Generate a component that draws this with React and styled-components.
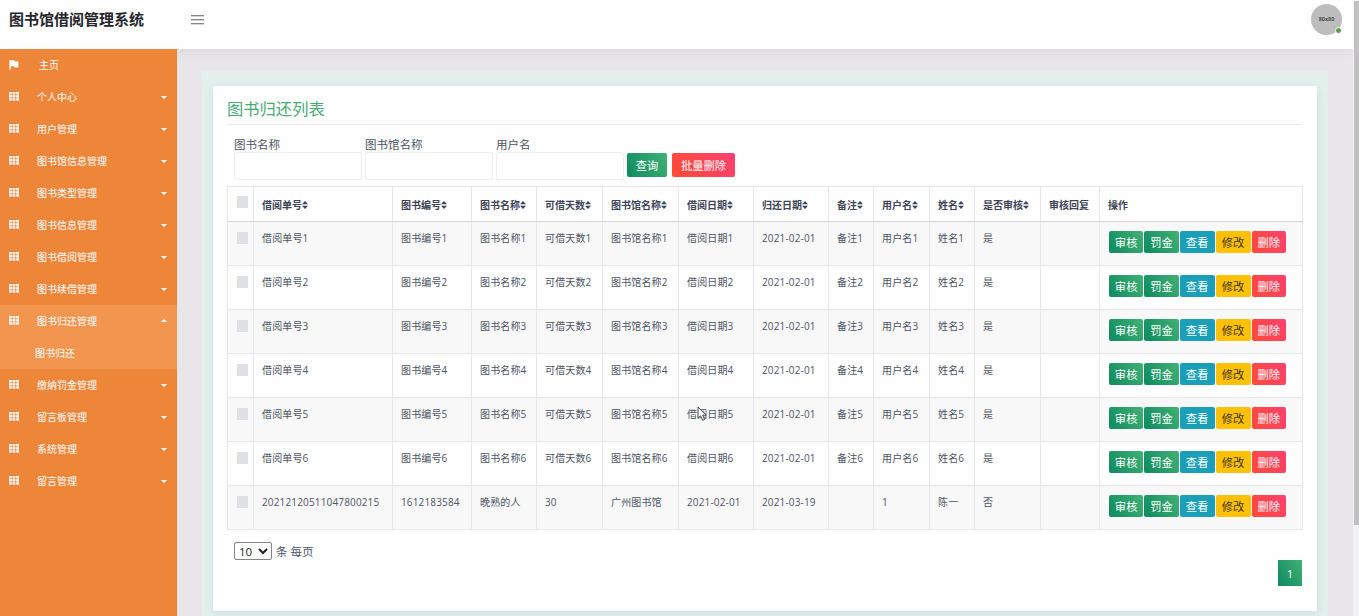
import React from 'react'
import styled, { createGlobalStyle } from 'styled-components'

const columns = [
  { title: '借阅单号', width: 139, sort: true },
  { title: '图书编号', width: 79, sort: true },
  { title: '图书名称', width: 65, sort: true },
  { title: '可借天数', width: 66, sort: true },
  { title: '图书馆名称', width: 76, sort: true },
  { title: '借阅日期', width: 75, sort: true },
  { title: '归还日期', width: 75, sort: true },
  { title: '备注', width: 45, sort: true },
  { title: '用户名', width: 56, sort: true },
  { title: '姓名', width: 45, sort: true },
  { title: '是否审核', width: 66, sort: true },
  { title: '审核回复', width: 59 },
  { title: '操作', width: 203 }
]

const rows = [
  ...[1, 2, 3, 4, 5, 6].map((n) => [
    `借阅单号${n}`, `图书编号${n}`, `图书名称${n}`, `可借天数${n}`, `图书馆名称${n}`,
    `借阅日期${n}`, '2021-02-01', `备注${n}`, `用户名${n}`, `姓名${n}`, '是', ''
  ]),
  ['20212120511047800215', '1612183584', '晚熟的人', '30', '广州图书馆', '2021-02-01', '2021-03-19', '', '1', '陈一', '否', '']
]

const menu = [
  '个人中心', '用户管理', '图书馆信息管理', '图书类型管理', '图书信息管理', '图书借阅管理',
  '图书续借管理', '图书归还管理', '缴纳罚金管理', '留言板管理', '系统管理', '留言管理'
]

const GridIcon = () => (
  <svg width="10" height="9" viewBox="0 0 10 9" fill="#fff">
    {[0, 3.1, 6.2].map((y) => [0, 3.6, 7.2].map((x) => (
      <rect key={`${x}-${y}`} x={x} y={y} width="2.8" height="2.4" />
    )))}
  </svg>
)

const FlagIcon = () => (
  <svg width="10" height="10" viewBox="0 0 10 10" fill="#fff">
    <path d="M0.4 0.2H5.2L5.6 1.4H9.4V7.4H5.4L5 6.2H1.8V9.8H0.4Z" />
  </svg>
)

const SortIcon = () => (
  <svg width="6" height="8" viewBox="0 0 6 8" fill="#3e4457">
    <path d="M3 0L6 3.3H0ZM3 8L0 4.7H6Z" />
  </svg>
)

const Sidebar = () => (
  <Side>
    <MenuItem>
      <MenuIcon><FlagIcon /></MenuIcon>
      <HomeText>主页</HomeText>
    </MenuItem>
    {menu.map((name) => {
      const open = name === '图书归还管理'
      return (
        <MenuGroup key={name} $open={open}>
          <MenuItem>
            <MenuIcon><GridIcon /></MenuIcon>
            <MenuText>{name}</MenuText>
            <Caret $open={open} />
          </MenuItem>
          {open && <SubItem>图书归还</SubItem>}
        </MenuGroup>
      )
    })}
  </Side>
)

const ReturnTable = () => (
  <Table>
    <colgroup>
      <col style={{ width: 26 }} />
      {columns.map((col) => <col key={col.title} style={{ width: col.width }} />)}
    </colgroup>
    <thead>
      <tr>
        <HeadCell><Checkbox $head /></HeadCell>
        {columns.map((col) => (
          <HeadCell key={col.title}>
            <HeadLabel>{col.title}{col.sort && <SortIcon />}</HeadLabel>
          </HeadCell>
        ))}
      </tr>
    </thead>
    <tbody>
      {rows.map((row, r) => (
        <BodyRow key={row[0]}>
          <Cell><Checkbox /></Cell>
          {row.map((text, c) => (
            <Cell key={columns[c].title}>
              {text}
              {r === 4 && c === 5 && (
                <Pointer width="11" height="16" viewBox="0 0 11 16">
                  <path d="M1 1V12.2L3.6 9.8L5.6 14.4L7.6 13.5L5.7 9.1H9.3Z" fill="#fff" stroke="#333" strokeWidth="0.9" />
                </Pointer>
              )}
            </Cell>
          ))}
          <Cell>
            <Actions>
              <ActionButton $kind="green">审核</ActionButton>
              <ActionButton $kind="green">罚金</ActionButton>
              <ActionButton $kind="info">查看</ActionButton>
              <ActionButton $kind="warning">修改</ActionButton>
              <ActionButton $kind="danger">删除</ActionButton>
            </Actions>
          </Cell>
        </BodyRow>
      ))}
    </tbody>
  </Table>
)

const App = () => (
  <Window>
    <GlobalStyle />
    <Page>
      <Header>
        <Brand>图书馆借阅管理系统</Brand>
        <MenuToggle><span /><span /><span /></MenuToggle>
        <Avatar>80x80<Status /></Avatar>
      </Header>
      <Body>
        <Sidebar />
        <Main>
          <Panel>
            <Card>
              <Title>图书归还列表</Title>
              <Filters>
                {['图书名称', '图书馆名称', '用户名'].map((label) => (
                  <Field key={label}>
                    {label}
                    <Input />
                  </Field>
                ))}
                <SearchButton $kind="green">查询</SearchButton>
                <SearchButton $kind="danger">批量删除</SearchButton>
              </Filters>
              <ReturnTable />
              <PageSize>
                <Select defaultValue="10">
                  <option>10</option>
                  <option>25</option>
                  <option>50</option>
                </Select>
                条 每页
              </PageSize>
              <Pagination><PageButton>1</PageButton></Pagination>
            </Card>
          </Panel>
        </Main>
      </Body>
    </Page>
    <ScrollTrack><ScrollThumb /></ScrollTrack>
  </Window>
)

export default App

const GlobalStyle = createGlobalStyle`
  * {
    box-sizing: border-box;
  }

  body {
    margin: 0;
    overflow: hidden;
    font-family: 'Open Sans', 'Noto Sans CJK SC', sans-serif;
    font-size: 10px;
    color: #4d5463;
  }

  button, input, select {
    font-family: inherit;
  }

  svg {
    display: block;
  }
`

const fills = {
  green: 'linear-gradient(60deg, #0e8a5f, #41b176)',
  danger: 'linear-gradient(60deg, #ff4b35, #ff4070)',
  info: '#1b9fb8',
  warning: '#fec107'
}

const Window = styled.div`
  display: flex;
  height: 616px;
  overflow: hidden;
`
const Page = styled.div`
  flex: 1;
  display: flex;
  flex-direction: column;
  min-width: 0;
  background: #e8e6e9;
`
const Header = styled.header`
  display: flex;
  flex: 0 0 49px;
  padding: 0 11px 0 9px;
  background: #fefefe;
  box-shadow: 0 2px 16px rgba(0, 0, 0, 0.06);
`
const Brand = styled.h1`
  width: 182px;
  margin: 0;
  font-size: 15px;
  font-weight: 700;
  line-height: 38px;
  color: #24262b;
`
const MenuToggle = styled.div`
  display: flex;
  flex-direction: column;
  gap: 3px;
  width: 13px;
  margin-top: 15px;

  span {
    height: 1px;
    background: #858585;
    box-shadow: 0 1px 0 #d5d5d5;
  }
`
const Avatar = styled.div`
  position: relative;
  width: 31px;
  height: 31px;
  margin: 4px 0 0 auto;
  border-radius: 50%;
  background: #bdbdbd;
  color: #333;
  font-size: 5.5px;
  font-weight: 600;
  line-height: 31px;
  text-align: center;
`
const Status = styled.span`
  position: absolute;
  right: 0;
  bottom: 1px;
  width: 7px;
  height: 7px;
  border: 1.5px solid #fff;
  border-radius: 50%;
  background: #5f9a52;
`
const Body = styled.div`
  display: flex;
  flex: 1;
  min-height: 0;
`
const Side = styled.nav`
  position: relative;
  flex: 0 0 177px;
  background: #ee863a;
  color: #fff;
`
const MenuGroup = styled.div`
  background: ${(props) => (props.$open ? '#f1954f' : 'transparent')};
`
const MenuItem = styled.div`
  display: flex;
  height: 32px;
  padding: 0 10px 0 9px;
`
const MenuIcon = styled.div`
  width: 28px;
  padding-top: 11px;
`
const MenuText = styled.span`
  flex: 1;
  line-height: 33px;
`
const HomeText = styled(MenuText)`
  padding-left: 2px;
`
const Caret = styled.i`
  width: 0;
  height: 0;
  margin-top: 15px;
  border: 3px solid transparent;
  border-top-color: ${(props) => (props.$open ? 'transparent' : '#fff')};
  border-bottom-color: ${(props) => (props.$open ? '#fff' : 'transparent')};
  ${(props) => props.$open && 'margin-top: 11px;'}
`
const SubItem = styled.div`
  height: 32px;
  padding-left: 35px;
  line-height: 32px;
`
const Main = styled.main`
  flex: 1;
  min-width: 0;
  padding: 22px 25px 0;
`
const Panel = styled.section`
  height: 545px;
  padding: 15px 11px 0;
  background: #e4f0ec;
`
const Card = styled.div`
  height: 525px;
  padding: 11px 15px 0 14px;
  border-radius: 2px;
  background: #fefefe;
  box-shadow: 0 2px 9px rgba(120, 170, 190, 0.25);
`
const Title = styled.h2`
  height: 28px;
  margin: 0 0 12px;
  border-bottom: 1px solid #e8eaec;
  font-size: 16.3px;
  font-weight: 400;
  line-height: 25px;
  color: #4aa975;
`
const Filters = styled.div`
  display: flex;
  height: 49px;
  padding-left: 7px;
`
const Field = styled.label`
  width: 128px;
  margin-right: 3px;
  font-size: 11.5px;
  line-height: 15px;
`
const Input = styled.input`
  display: block;
  width: 128px;
  height: 28px;
  border: 1px solid #eeeff1;
  border-radius: 2px;
  background: #fefefe;
`
const Button = styled.button`
  padding: 0;
  border: 0;
  border-radius: 2px;
  background: ${(props) => fills[props.$kind]};
  color: ${(props) => (props.$kind === 'warning' ? '#3c3518' : '#fff')};
  white-space: nowrap;
`
const SearchButton = styled(Button)`
  width: ${(props) => (props.$kind === 'green' ? '40px' : '63px')};
  height: 24px;
  margin: 16px 5px 0 0;
  font-size: 11.3px;
`
const Table = styled.table`
  width: 1075px;
  table-layout: fixed;
  border-collapse: collapse;
`
const HeadCell = styled.th`
  height: 35px;
  padding: 0 0 0 8px;
  border: 1px solid #e6e7ea;
  border-bottom: 1px solid #d3d5da;
  vertical-align: middle;
  text-align: left;
  font-weight: 700;
  color: #3e4457;
`
const HeadLabel = styled.div`
  display: flex;
  align-items: center;
  padding-top: 2px;
  line-height: 14px;
  white-space: nowrap;
`
const BodyRow = styled.tr`
  height: 44px;

  &:nth-child(odd) {
    background: #f8f8f9;
  }
`
const Cell = styled.td`
  position: relative;
  padding: 9px 0 0 8px;
  border: 1px solid #e6e7ea;
  vertical-align: top;
  font-size: 10px;
  line-height: 15px;
  letter-spacing: 0.15px;
  white-space: nowrap;
`
const Checkbox = styled.div`
  width: 11px;
  height: 12px;
  margin: ${(props) => (props.$head ? '-4px 0 0 1px' : '1px 0 0 1px')};
  background: #e0e1e6;
`
const Actions = styled.div`
  display: flex;
  gap: 1px;
  padding-left: 1px;
`
const ActionButton = styled(Button)`
  width: ${(props) => (props.$kind === 'info' || props.$kind === 'warning' ? '35px' : '34.3px')};
  height: 22px;
  font-size: 11.3px;
`
const Pointer = styled.svg`
  position: absolute;
  left: 18px;
  top: 8px;
`
const PageSize = styled.div`
  display: flex;
  align-items: center;
  gap: 4px;
  height: 18px;
  margin: 12px 0 0 7px;
  font-size: 11.5px;
`
const Select = styled.select`
  width: 38px;
  height: 18px;
  padding: 0;
  border: 1px solid #858585;
  border-radius: 2px;
  background: #fff;
  color: #222;
  font-size: 11.5px;
`
const Pagination = styled.div`
  display: flex;
  justify-content: flex-end;
`
const PageButton = styled.button`
  width: 24px;
  height: 26px;
  padding: 0;
  border: 0;
  background: ${fills.green};
  color: #fff;
  font-size: 11.5px;
`
const ScrollTrack = styled.div`
  flex: 0 0 6px;
  padding: 1px 0 0 1px;
  background: #f2f1f3;
`
const ScrollThumb = styled.div`
  height: 524px;
  background: #c1c1c2;
`
